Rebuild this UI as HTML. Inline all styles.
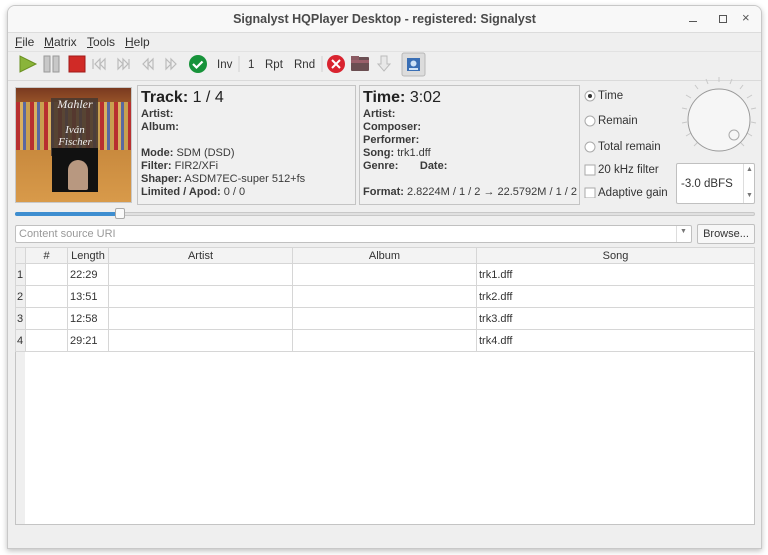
<!DOCTYPE html>
<html><head><meta charset="utf-8"><style>
*{box-sizing:border-box;margin:0;padding:0}
body{width:768px;height:555px;background:#fff;position:relative;overflow:hidden;font-family:"Liberation Sans",sans-serif;font-size:11px;color:#333}
.a{position:absolute}
#win{left:7px;top:5px;width:755px;height:544px;background:#efefef;border:1px solid #c8c8c8;border-radius:8px 8px 0 0;box-shadow:0 2px 6px rgba(0,0,0,.25);overflow:hidden}
#title{left:0;top:0;width:100%;height:27px;background:#f8f8f8;border-bottom:1px solid #dcdcdc;text-align:center;font-size:12.5px;font-weight:bold;color:#4a4a4a;line-height:27px}
.box{border:1px solid #c4c4c4;background:#f0f0f0}
.b{font-weight:bold}
.ln{line-height:13px;font-size:11px;color:#3a3a3a}
.tb{font-size:11.5px;color:#333}
table{border-collapse:collapse;font-size:11px}
td,th{border:1px solid #d6d6d6;height:22px;padding:0 2px;font-weight:normal;text-align:left}
th{height:16px;background:#f3f3f3;text-align:center;color:#333}
</style></head><body>
<div class="a" id="win">
<div class="a" id="title">Signalyst HQPlayer Desktop - registered: Signalyst</div>
<div class="a" style="left:681px;top:15px;width:8px;height:1px;background:#555"></div>
<div class="a" style="left:711px;top:9px;width:8px;height:8px;border:1px solid #555"></div>
<div class="a" style="left:734px;top:4px;font-size:13px;color:#555">×</div>
<!-- menu -->
<div class="a tb" style="left:7px;top:29px;font-size:12px"><u>F</u>ile</div>
<div class="a tb" style="left:36px;top:29px;font-size:12px"><u>M</u>atrix</div>
<div class="a tb" style="left:79px;top:29px;font-size:12px"><u>T</u>ools</div>
<div class="a tb" style="left:117px;top:29px;font-size:12px"><u>H</u>elp</div>
<div class="a" style="left:0;top:45px;width:100%;height:1px;background:#e2e2e2"></div>
<!-- toolbar -->
<svg class="a" style="left:-2px;top:46px" width="420" height="28">
<polygon points="14,4 14,20 30,12" fill="#8ab43a" stroke="#6a9020"/>
<rect x="38" y="4" width="6" height="16" fill="#c8c8c8" stroke="#999"/><rect x="47" y="4" width="6" height="16" fill="#c8c8c8" stroke="#999"/>
<rect x="63" y="4" width="16" height="16" fill="#d02a26" stroke="#a01a18"/>
<g fill="none" stroke="#bbb" stroke-width="1.2"><path d="M87 7v10M89 12l5-5v10zM94 12l5-5v10z"/><path d="M112 7l5 5-5 5zM117 7l5 5-5 5zM123 7v10"/><path d="M137 12l5-5v10zM142 12l5-5v10z"/><path d="M160 7l5 5-5 5zM165 7l5 5-5 5z"/></g>
<circle cx="192" cy="12" r="9" fill="#17933a"/><path d="M187 12l3.5 3.5 6-6" stroke="#fff" stroke-width="2.2" fill="none"/>
<line x1="233" y1="4" x2="233" y2="20" stroke="#d0d0d0"/>
<line x1="316" y1="4" x2="316" y2="20" stroke="#d0d0d0"/>
<circle cx="330" cy="12" r="9" fill="#d9232f"/><path d="M326 8l8 8M334 8l-8 8" stroke="#fff" stroke-width="2"/>
<rect x="345" y="5" width="18" height="14" rx="1" fill="#6b4e52"/><rect x="345" y="4" width="8" height="4" fill="#8b5a62"/><rect x="345" y="8" width="18" height="3" fill="#9a5f6a"/>
<path d="M375 4h6v8h3l-6 7-6-7h3z" fill="#e8e8e8" stroke="#bbb"/>
<rect x="396" y="1" width="23" height="23" rx="2" fill="#dcdcdc" stroke="#b8b8b8"/>
<rect x="401" y="6" width="13" height="13" fill="#3a6fb5"/><circle cx="407.5" cy="11.5" r="3" fill="#cfe3f7"/><rect x="403" y="16" width="9" height="2" fill="#cfe3f7"/>
</svg>
<div class="a tb" style="left:209px;top:53px">Inv</div>
<div class="a tb" style="left:240px;top:53px">1</div>
<div class="a tb" style="left:257px;top:53px">Rpt</div>
<div class="a tb" style="left:286px;top:53px">Rnd</div>
<div class="a" style="left:0;top:74px;width:100%;height:1px;background:#dadada"></div>
<!-- album art -->
<div class="a" style="left:7px;top:81px;width:117px;height:116px;border:1px solid #c8c8c8;background:linear-gradient(180deg,#7a3a20 0%,#b36a30 25%,#c98a3e 55%,#d89a4a 100%)">
<div class="a" style="left:0;top:14px;width:100%;height:48px;background:repeating-linear-gradient(90deg,#b83030 0 4px,#d9b060 4px 7px,#5a68a0 7px 10px,#c8a050 10px 14px)"></div>
<div class="a" style="left:35px;top:10px;width:47px;height:58px;background:#4a3a30;opacity:.9"></div>
<div class="a" style="left:36px;top:60px;width:46px;height:44px;background:#111"></div>
<div class="a" style="left:52px;top:72px;width:20px;height:30px;border-radius:10px 10px 2px 2px;background:#b89880"></div>
<div class="a" style="left:36px;top:9px;width:46px;text-align:center;font-family:'Liberation Serif',serif;font-style:italic;color:#eee;font-size:12px">Mahler</div>
<div class="a" style="left:36px;top:36px;width:46px;text-align:center;font-family:'Liberation Serif',serif;font-style:italic;color:#eee;font-size:11px;line-height:12px">Iván<br>Fischer</div>
</div>
<!-- track box -->
<div class="a box" style="left:129px;top:79px;width:219px;height:120px"></div>
<div class="a" style="left:133px;top:83px;font-size:16px;color:#222"><b>Track:</b> 1 / 4</div>
<div class="a ln" style="left:133px;top:102px"><b>Artist:</b><br><b>Album:</b><br><br><b>Mode:</b> SDM (DSD)<br><b>Filter:</b> FIR2/XFi<br><b>Shaper:</b> ASDM7EC-super 512+fs<br><b>Limited / Apod:</b> 0 / 0</div>
<!-- time box -->
<div class="a box" style="left:351px;top:79px;width:221px;height:120px"></div>
<div class="a" style="left:355px;top:83px;font-size:16px;color:#222"><b>Time:</b> 3:02</div>
<div class="a ln" style="left:355px;top:102px"><b>Artist:</b><br><b>Composer:</b><br><b>Performer:</b><br><b>Song:</b> trk1.dff<br><b>Genre:</b>&nbsp;&nbsp;&nbsp;&nbsp;&nbsp;&nbsp;&nbsp;<b>Date:</b><br><br><b>Format:</b> 2.8224M / 1 / 2 → 22.5792M / 1 / 2</div>
<!-- radios -->
<svg class="a" style="left:575px;top:82px" width="20" height="110">
<circle cx="7" cy="8" r="5" fill="#fff" stroke="#aaa"/><circle cx="7" cy="8" r="2" fill="#333"/>
<circle cx="7" cy="33" r="5" fill="#fff" stroke="#aaa"/>
<circle cx="7" cy="59" r="5" fill="#fff" stroke="#aaa"/>
<rect x="2" y="77" width="10" height="10" fill="#fff" stroke="#aaa"/>
<rect x="2" y="100" width="10" height="10" fill="#fff" stroke="#aaa"/>
</svg>
<div class="a tb" style="left:590px;top:84px">Time</div>
<div class="a tb" style="left:590px;top:109px">Remain</div>
<div class="a tb" style="left:590px;top:135px">Total remain</div>
<div class="a tb" style="left:590px;top:158px">20 kHz filter</div>
<div class="a tb" style="left:590px;top:181px">Adaptive gain</div>
<!-- knob -->
<svg class="a" style="left:668px;top:67px" width="86" height="86">
<g stroke="#c8c8c8" stroke-width="1">
<line x1="43" y1="4" x2="43" y2="9"/><line x1="56" y1="6" x2="54" y2="11"/><line x1="30" y1="6" x2="32" y2="11"/>
<line x1="67" y1="12" x2="64" y2="16"/><line x1="19" y1="12" x2="22" y2="16"/>
<line x1="76" y1="22" x2="71" y2="25"/><line x1="10" y1="22" x2="15" y2="25"/>
<line x1="80" y1="35" x2="75" y2="36"/><line x1="6" y1="35" x2="11" y2="36"/>
<line x1="80" y1="50" x2="75" y2="49"/><line x1="6" y1="50" x2="11" y2="49"/>
<line x1="76" y1="63" x2="71" y2="60"/><line x1="10" y1="63" x2="15" y2="60"/>
<line x1="68" y1="73" x2="64" y2="69"/><line x1="18" y1="73" x2="22" y2="69"/>
</g>
<circle cx="43" cy="47" r="31" fill="#f6f6f6" stroke="#9a9a9a"/>
<circle cx="58" cy="62" r="5" fill="none" stroke="#aaa"/>
</svg>
<!-- spinbox -->
<div class="a" style="left:668px;top:157px;width:79px;height:41px;background:#fff;border:1px solid #c0c0c0;border-radius:2px"></div>
<div class="a" style="left:735px;top:158px;width:1px;height:39px;background:#ddd"></div>
<div class="a" style="left:738px;top:160px;font-size:7px;color:#777">▲</div>
<div class="a" style="left:738px;top:186px;font-size:7px;color:#777">▼</div>
<div class="a tb" style="left:673px;top:172px">-3.0 dBFS</div>
<!-- slider -->
<div class="a" style="left:7px;top:206px;width:740px;height:4px;background:#e0e0e0;border:1px solid #c8c8c8;border-radius:2px"></div>
<div class="a" style="left:7px;top:206px;width:108px;height:4px;background:#3e8ed0;border-radius:2px"></div>
<div class="a" style="left:107px;top:202px;width:10px;height:11px;background:#fafafa;border:1px solid #aaa;border-radius:2px"></div>
<!-- combo -->
<div class="a" style="left:7px;top:219px;width:677px;height:18px;background:#fff;border:1px solid #c0c0c0;border-radius:2px;color:#999;padding-left:3px;line-height:16px;font-size:11px">Content source URI</div>
<div class="a" style="left:668px;top:220px;width:1px;height:16px;background:#ddd"></div>
<div class="a" style="left:672px;top:222px;font-size:7px;color:#777">▼</div>
<div class="a" style="left:689px;top:218px;width:58px;height:20px;background:#f7f7f7;border:1px solid #c0c0c0;border-radius:2px;text-align:center;line-height:18px;font-size:11px">Browse...</div>
<!-- table -->
<div class="a" style="left:7px;top:241px;width:740px;height:278px;background:#fff;border:1px solid #c4c4c4"></div>
<div class="a" style="left:8px;top:242px;width:9px;height:276px;background:#efefef"></div>
<table class="a" style="left:7px;top:241px;width:740px">
<tr><th style="width:10px;background:#efefef"></th><th style="width:42px">#</th><th style="width:41px">Length</th><th style="width:184px">Artist</th><th style="width:184px">Album</th><th>Song</th></tr>
<tr><td style="background:#efefef;padding:0 1px">1</td><td></td><td>22:29</td><td></td><td></td><td>trk1.dff</td></tr>
<tr><td style="background:#efefef;padding:0 1px">2</td><td></td><td>13:51</td><td></td><td></td><td>trk2.dff</td></tr>
<tr><td style="background:#efefef;padding:0 1px">3</td><td></td><td>12:58</td><td></td><td></td><td>trk3.dff</td></tr>
<tr><td style="background:#efefef;padding:0 1px">4</td><td></td><td>29:21</td><td></td><td></td><td>trk4.dff</td></tr>
</table>
</div>
</body></html>
